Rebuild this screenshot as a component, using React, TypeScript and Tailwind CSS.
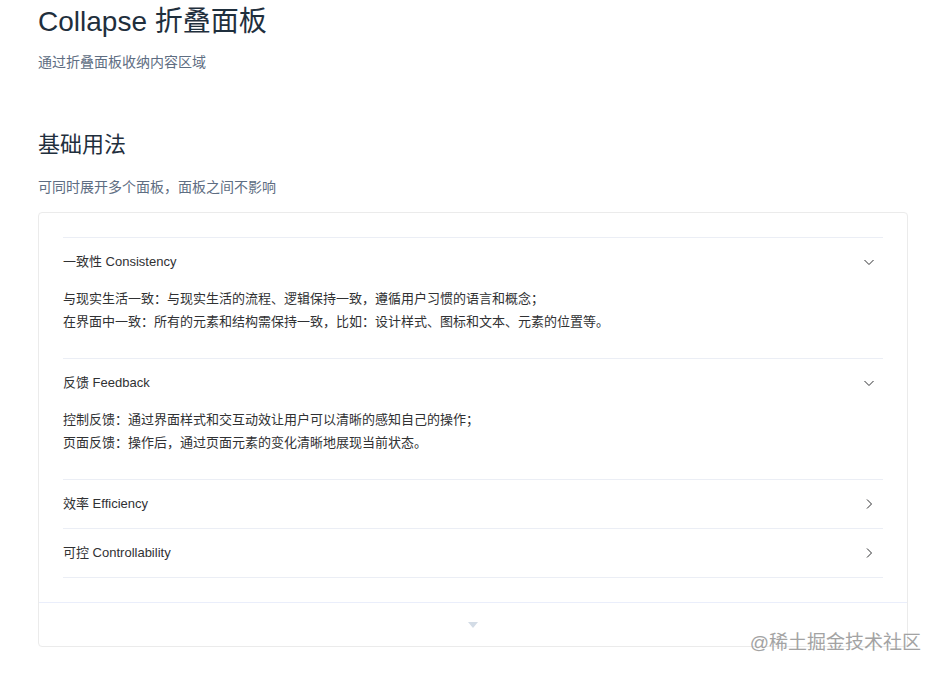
import React from "react";

const font = { fontFamily: '"Liberation Sans", "Noto Sans CJK SC", sans-serif' };

function ChevronDown() {
  return (
    <svg width="12" height="12" viewBox="0 0 12 12" fill="none" className="mr-2">
      <path d="M1.5 4 L6 8.5 L10.5 4" stroke="#303133" strokeWidth="1" />
    </svg>
  );
}

function ChevronRight() {
  return (
    <svg width="12" height="12" viewBox="0 0 12 12" fill="none" className="mr-2">
      <path d="M4 1.5 L8.5 6 L4 10.5" stroke="#303133" strokeWidth="1" />
    </svg>
  );
}

type Item = { title: string; open: boolean; lines: string[] };

const items: Item[] = [
  {
    title: "一致性 Consistency",
    open: true,
    lines: [
      "与现实生活一致：与现实生活的流程、逻辑保持一致，遵循用户习惯的语言和概念；",
      "在界面中一致：所有的元素和结构需保持一致，比如：设计样式、图标和文本、元素的位置等。",
    ],
  },
  {
    title: "反馈 Feedback",
    open: true,
    lines: [
      "控制反馈：通过界面样式和交互动效让用户可以清晰的感知自己的操作；",
      "页面反馈：操作后，通过页面元素的变化清晰地展现当前状态。",
    ],
  },
  { title: "效率 Efficiency", open: false, lines: [] },
  { title: "可控 Controllability", open: false, lines: [] },
];

export default function App() {
  return (
    <div className="relative w-[940px] h-[673px] bg-white overflow-hidden" style={font}>
      <div className="pl-[38px] pr-[32px]">
        <h2 className="m-0 pt-[2px] text-[28px] leading-[40px] font-normal text-[#1f2f3d]">
          Collapse 折叠面板
        </h2>
        <p className="mt-[9.5px] text-[14px] leading-[21px] text-[#5e6d82]">通过折叠面板收纳内容区域</p>
        <h3 className="mt-[55px] text-[22px] leading-[33px] font-normal text-[#1f2f3d]">基础用法</h3>
        <p className="mt-[16px] text-[14px] leading-[21px] text-[#5e6d82]">
          可同时展开多个面板，面板之间不影响
        </p>
        <div className="mt-[14.5px] border border-[#ebebeb] rounded-[4px]">
          <div className="p-[24px]">
            <div className="border-t border-[#ebeef5]">
              {items.map((it) => (
                <div key={it.title}>
                  <div
                    className={
                      "h-[49px] flex items-center justify-between border-b text-[13px] text-[#303133] " +
                      (it.open ? "border-transparent" : "border-[#ebeef5]")
                    }
                  >
                    <span>{it.title}</span>
                    {it.open ? <ChevronDown /> : <ChevronRight />}
                  </div>
                  {it.open && (
                    <div className="border-b border-[#ebeef5] pb-[25px] text-[13px] leading-[23px] text-[#303133]">
                      {it.lines.map((l) => (
                        <div key={l}>{l}</div>
                      ))}
                    </div>
                  )}
                </div>
              ))}
            </div>
          </div>
          <div className="h-[44px] border-t border-[#eaeefb] flex items-center justify-center">
            <svg width="10" height="6" viewBox="0 0 10 6">
              <path d="M0 0 L10 0 L5 6 Z" fill="#d3dce6" />
            </svg>
          </div>
        </div>
      </div>
      <div className="absolute right-[19px] bottom-[17px] text-[19px] leading-[26px] text-[#9a9a9a] opacity-90">
        @稀土掘金技术社区
      </div>
    </div>
  );
}
